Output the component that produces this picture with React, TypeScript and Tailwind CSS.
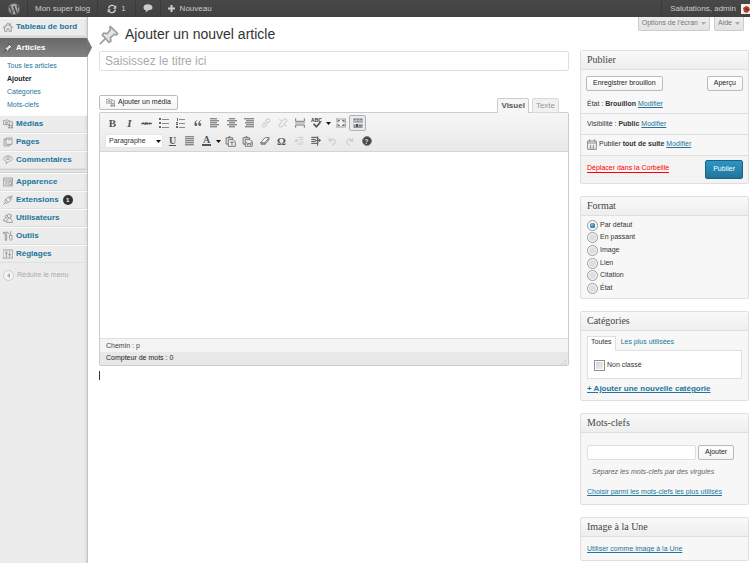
import type { ReactNode } from "react";
import { FaWordpress } from "react-icons/fa";

/* ---------- icons (drawn on a 30-unit grid) ---------- */

function Glyph({ children, className = "size-[10px]" }: { children: ReactNode; className?: string }) {
  return (
    <svg
      viewBox="0 0 30 30"
      className={`shrink-0 ${className}`}
      fill="none"
      stroke="currentColor"
      strokeWidth="2.5"
      strokeLinecap="round"
      strokeLinejoin="round"
      aria-hidden="true"
    >
      {children}
    </svg>
  );
}

const HomeIcon = () => (
  <Glyph>
    <path d="M1 16 15 3l14 13-3 2L15 8 4 18zM5 18v10h7v-8h6v8h7V18M22 4v5" />
  </Glyph>
);

const PinIcon = ({ className, fill = "#e4e4e4" }: { className?: string; fill?: string }) => (
  <Glyph className={className}>
    <path d="M17 2 28 13l-2 2-3-1-6 5 1 5-3 2L5 15l2-3 5 1 5-6-1-3z" fill={fill} />
    <path d="M10 20 2 28" />
  </Glyph>
);

const MediaIcon = ({ className }: { className?: string }) => (
  <Glyph className={className}>
    <path d="M2 5h4l2-2h5l2 2h4v12H2z" />
    <circle cx="10" cy="11" r="3" />
    <path d="M22 8h6v11H16M20 19v7M28 19v7" />
    <circle cx="18" cy="26" r="2" />
    <circle cx="26" cy="26" r="2" />
  </Glyph>
);

const PagesIcon = () => (
  <Glyph>
    <path d="M10 3h17v19H10zM10 7H3v20h17v-5M15 8h7" />
  </Glyph>
);

const CommentIcon = () => (
  <Glyph>
    <path d="M15 3C7 3 2 6 2 11s4 8 9 8l-2 8 8-8c7 0 11-3 11-8s-5-8-13-8zM9 9h12M9 13h10" strokeWidth="2" />
  </Glyph>
);

const AppearanceIcon = () => (
  <Glyph>
    <path d="M2 3h26v24H2zM2 9h26M6 15h9M6 21h7M19 14h6v9h-6z" />
  </Glyph>
);

const PlugIcon = () => (
  <Glyph>
    <path d="m2 28 6-6M8 14l8 8c-3 3-7 3-9 1s-2-6 1-9zM9 13C11 7 17 4 22 6l-4 4M17 21c6-2 9-8 7-13l-4 4M22 6l5-4M24 8l4-4" />
  </Glyph>
);

const UsersIcon = () => (
  <Glyph>
    <circle cx="19" cy="9" r="6" />
    <path d="M11 27c0-8 3-11 8-11s9 3 9 11zM11 6a4 4 0 1 0 0 8M8 15c-4 1-6 4-6 9h6" />
  </Glyph>
);

const ToolsIcon = () => (
  <Glyph>
    <path d="M1 4h14l2 4M1 4v4h6v20h4V8M23 2v11M20 13h7v12c0 4-7 4-7 0z" />
  </Glyph>
);

const SettingsIcon = () => (
  <Glyph>
    <path d="M1 3h28v24H1z" />
    <path d="M10 8v15M20 8v15M7 12h6M17 17h6" />
  </Glyph>
);

const Caret = ({ className = "" }: { className?: string }) => (
  <svg viewBox="0 0 10 6" className={`h-[3px] w-[5px] shrink-0 ${className}`} fill="currentColor" aria-hidden="true">
    <path d="M0 0h10L5 6z" />
  </svg>
);

const Lines = ({ rows }: { rows: [number, number][] }) => (
  <svg viewBox="0 0 10 10" className="size-[10px]" fill="#8a8a8a" aria-hidden="true">
    {rows.map(([x, w], i) => (
      <rect key={i} x={x} y={i * 2} width={w} height="1.4" />
    ))}
  </svg>
);

const LinkGlyph = ({ broken }: { broken?: boolean }) => (
  <Glyph className="size-[10px] text-[#d0d0d0]">
    <g strokeWidth="3.5">
      <path d="m13 9 5-5c5-4 11 2 7 7l-5 5M17 21l-5 5c-5 4-11-2-7-7l5-5" />
      {broken ? <path d="M5 5l5 5M24 24l-5-5" /> : <path d="m11 19 8-8" />}
    </g>
  </Glyph>
);

const PasteGlyph = ({ letter }: { letter: string }) => (
  <Glyph className="size-[11px] text-[#6a6a6a]">
    <path d="M8 22H3V5h18v4M8 5l2-3h4l2 3" />
    <path d="M10 10h12l6 6v12H10z" fill="#f4f4f4" />
    {letter === "T" ? <path d="M15 17h8M19 17v8" /> : <path d="m13 17 2 8 4-6 4 6 2-8" />}
  </Glyph>
);

const IndentGlyph = ({ out }: { out?: boolean }) => (
  <Glyph className={out ? "size-[10px] text-[#cccccc]" : "size-[10px] text-[#555]"}>
    {out ? (
      <path d="M12 4h15M18 10h9M18 18h9M12 24h15M9 9l-6 5 6 5M3 14h11" strokeWidth="3" />
    ) : (
      <path d="M2 4h18M2 10h11M2 16h11M2 22h18M20 3v25M14 13h14M23 8l5 5-5 5" strokeWidth="3" />
    )}
  </Glyph>
);

/* ---------- toolbar ---------- */

function Tool({ label, active, children }: { label: string; active?: boolean; children: ReactNode }) {
  return (
    <button
      type="button"
      aria-label={label}
      title={label}
      className={`flex h-[16px] w-[17px] shrink-0 items-center justify-center rounded-xs border leading-none ${
        active ? "border-[#b0b0b0] bg-[#e9ecee]" : "border-transparent"
      }`}
    >
      {children}
    </button>
  );
}

function DropArrow({ label }: { label: string }) {
  return (
    <button type="button" aria-label={label} className="flex h-[16px] w-[7px] shrink-0 items-center justify-center text-[#111]">
      <Caret />
    </button>
  );
}

const serif = "font-['Liberation_Serif',serif]";

function Toolbar() {
  return (
    <div className="flex flex-col gap-[2px] border-b border-[#d5d5d5] bg-linear-to-b from-[#f6f6f6] to-[#e9e9e9] pt-[2px] pb-[2px] pl-[4px]">
      <div className="flex h-[16px] items-center">
        <Tool label="Gras"><span className={`${serif} text-[11px] font-bold text-[#555]`}>B</span></Tool>
        <Tool label="Italique"><span className={`${serif} text-[11px] font-bold text-[#555] italic`}>I</span></Tool>
        <Tool label="Barré"><span className={`${serif} text-[5px] font-bold text-[#555] line-through`}>ABC</span></Tool>
        <Tool label="Liste à puces">
          <svg viewBox="0 0 10 10" className="size-[10px]" fill="#8a8a8a" aria-hidden="true">
            <path d="M0 0h2v2H0zM0 4h2v2H0zM0 8h2v2H0z" fill="#666" />
            <path d="M3 1h7v1H3zM3 5h7v1H3zM3 9h7v1H3z" />
          </svg>
        </Tool>
        <Tool label="Liste numérotée">
          <svg viewBox="0 0 10 10" className="size-[10px]" fill="#8a8a8a" aria-hidden="true">
            <path d="M1 0h1v3H1zM0 4h2v1L1 6h1v1H0V6l1-1H0zM0 8h2v2H0z" fill="#666" />
            <path d="M3 1h6v1H3zM3 5h6v1H3zM3 9h6v1H3z" />
          </svg>
        </Tool>
        <Tool label="Citation">
          <svg viewBox="0 0 24 20" className="h-[6px] w-[8px]" fill="#666" aria-hidden="true">
            <path d="M10 0C4 2 0 7 0 13c0 4 2 7 5 7s5-2 5-5-2-5-5-5c0-4 2-7 5-8zM23 0c-6 2-10 7-10 13 0 4 2 7 5 7s5-2 5-5-2-5-5-5c0-4 2-7 5-8z" />
          </svg>
        </Tool>
        <Tool label="Aligner à gauche"><Lines rows={[[0, 7], [0, 9], [0, 7], [0, 9], [0, 7]]} /></Tool>
        <Tool label="Centrer"><Lines rows={[[2, 6], [0, 10], [2, 6], [0, 10], [2, 6]]} /></Tool>
        <Tool label="Aligner à droite"><Lines rows={[[0, 10], [2, 8], [1, 9], [2, 8], [1, 9]]} /></Tool>
        <Tool label="Insérer un lien"><LinkGlyph /></Tool>
        <Tool label="Supprimer le lien"><LinkGlyph broken /></Tool>
        <Tool label="Balise Lire la suite">
          <Glyph className="size-[10px] text-[#7a7a7a]">
            <path d="M2 2v8h26V2M2 28v-7h26v7M2 15h2M8 15h2M14 15h2M20 15h2M26 15h2" strokeWidth="3" />
          </Glyph>
        </Tool>
        <Tool label="Correcteur orthographique">
          <span className="flex flex-col items-center">
            <span className="text-[5px] leading-[4px] font-bold text-[#333]">ABC</span>
            <svg viewBox="0 0 14 10" className="h-[6px] w-[8px]" fill="none" stroke="#555" strokeWidth="3" aria-hidden="true">
              <path d="m1 3 5 5 7-8" />
            </svg>
          </span>
        </Tool>
        <DropArrow label="Choix de la langue" />
        <Tool label="Plein écran">
          <Glyph className="size-[10px] text-[#777]">
            <path d="M1 3h28v24H1z" strokeWidth="2" />
            <path d="M6 11V8h4M20 8h4v3M24 19v3h-4M10 22H6v-3" strokeWidth="4" />
          </Glyph>
        </Tool>
        <Tool label="Afficher/cacher les options" active>
          <svg viewBox="0 0 10 10" className="size-[10px]" aria-hidden="true">
            <rect width="10" height="10" fill="#b4bbbe" />
            <path d="M1 1.500h2M4 1.500h2M7 1.500h2" stroke="#788a90" />
            <path d="M1 3.500h2M7 3.500h2" stroke="#c79c65" />
            <path d="M4 3.500h2" stroke="#5e93ad" />
            <path d="M0 5.500h10" stroke="#e8eaea" />
            <path d="M1 7.500h1M6 7.500h3M1 9h8" stroke="#70777a" />
            <path d="M3 6h2v3H3z" fill="#4c5356" />
          </svg>
        </Tool>
      </div>
      <div className="flex h-[16px] items-center pl-px">
        <div className="relative mr-px w-[58px] shrink-0">
          <select
            aria-label="Format du paragraphe"
            className="block h-[14px] w-full appearance-none border border-[#e6e6e6] bg-white pl-[3px] text-[7px] leading-[12px] text-[#333]"
          >
            <option>Paragraphe</option>
          </select>
          <Caret className="pointer-events-none absolute top-[6px] right-[2px] text-[#111]" />
        </div>
        <Tool label="Souligné"><span className={`${serif} text-[10px] font-bold text-[#555] underline`}>U</span></Tool>
        <Tool label="Justifier"><Lines rows={[[0, 9], [0, 9], [0, 9], [0, 9], [0, 9]]} /></Tool>
        <Tool label="Couleur du texte">
          <span className={`${serif} border-b-2 border-[#555] px-px text-[10px] leading-[8px] font-bold text-[#555]`}>A</span>
        </Tool>
        <DropArrow label="Choix de la couleur" />
        <Tool label="Coller en texte brut"><PasteGlyph letter="T" /></Tool>
        <Tool label="Coller depuis Word"><PasteGlyph letter="W" /></Tool>
        <Tool label="Effacer la mise en forme">
          <Glyph className="size-[10px] text-[#666]">
            <path d="M3 19 15 5h12L15 19z" fill="#f8f8f8" />
            <path d="M3 19v6h12V19M15 25 27 11V5" fill="#999" strokeWidth="2" />
          </Glyph>
        </Tool>
        <Tool label="Caractère spécial"><span className={`${serif} text-[11px] font-bold text-[#555]`}>Ω</span></Tool>
        <Tool label="Diminuer le retrait"><IndentGlyph out /></Tool>
        <Tool label="Augmenter le retrait"><IndentGlyph /></Tool>
        <Tool label="Annuler">
          <Glyph className="size-[9px] text-[#cccccc]">
            <path d="M4 4v9h9M4 13C10 5 22 5 24 14c1 6-3 10-8 12" strokeWidth="3.5" />
          </Glyph>
        </Tool>
        <Tool label="Rétablir">
          <Glyph className="size-[9px] text-[#cccccc]">
            <path d="M26 4v9h-9M26 13C20 5 8 5 6 14c-1 6 3 10 8 12" strokeWidth="3.5" />
          </Glyph>
        </Tool>
        <Tool label="Aide">
          <span className="flex size-[10px] items-center justify-center rounded-full border border-[#888] bg-[#444] text-[7px] leading-none font-bold text-[#ddd]">
            ?
          </span>
        </Tool>
      </div>
    </div>
  );
}

/* ---------- side menu ---------- */

function MenuItem({ icon, label, badge }: { icon: ReactNode; label: string; badge?: string }) {
  return (
    <li>
      <a
        href="#"
        className="flex h-[18px] items-center gap-[3px] border-t border-t-[#f9f9f9] border-b border-b-[#dfdfdf] pl-[3px] text-[8px] font-bold text-[#21759b]"
      >
        <span className="text-[#929292]">{icon}</span>
        {label}
        {badge && (
          <span className="ml-px flex size-[10px] items-center justify-center rounded-full bg-[#333] text-[6px] leading-none text-white">
            {badge}
          </span>
        )}
      </a>
    </li>
  );
}

function SideMenu() {
  return (
    <nav className="w-[88px] shrink-0 border-r border-[#c4c4c4] bg-[#ececec] shadow-[inset_-3px_0_3px_-2px_#d4d4d4]">
      <ul className="pt-px">
        <MenuItem icon={<HomeIcon />} label="Tableau de bord" />
      </ul>
      <div className="h-[2px] bg-[#d8d8d8]" />
      <div className="relative">
        <a
          href="#"
          className="flex h-[19px] items-center gap-[3px] bg-linear-to-b from-[#686868] to-[#828282] pl-[3px] text-[8px] font-bold text-white"
        >
          <PinIcon className="size-[10px] text-[#4a4a4a]" fill="#f0e4e0" />
          Articles
        </a>
        <svg viewBox="0 0 10 38" className="absolute top-0 left-full h-[19px] w-[5px]" fill="#757575" aria-hidden="true">
          <path d="M0 0 10 19 0 38z" />
        </svg>
      </div>
      <ul className="bg-white pt-[2px] pb-[4px] pl-[7px] text-[7px] leading-[13px] text-[#21759b]">
        <li><a href="#">Tous les articles</a></li>
        <li><a href="#" className="font-bold text-[#222]">Ajouter</a></li>
        <li><a href="#">Catégories</a></li>
        <li><a href="#">Mots-clefs</a></li>
      </ul>
      <ul>
        <MenuItem icon={<MediaIcon />} label="Médias" />
        <MenuItem icon={<PagesIcon />} label="Pages" />
        <MenuItem icon={<CommentIcon />} label="Commentaires" />
      </ul>
      <div className="h-[4px] border-y border-[#cfcfcf] bg-[#e4e4e4]" />
      <ul>
        <MenuItem icon={<AppearanceIcon />} label="Apparence" />
        <MenuItem icon={<PlugIcon />} label="Extensions" badge="1" />
        <MenuItem icon={<UsersIcon />} label="Utilisateurs" />
        <MenuItem icon={<ToolsIcon />} label="Outils" />
        <MenuItem icon={<SettingsIcon />} label="Réglages" />
      </ul>
      <button type="button" className="mt-[6px] flex items-center gap-[3px] pl-[3px] text-[7px] leading-[12px] text-[#aaa]">
        <span className="flex size-[11px] items-center justify-center rounded-full border border-[#ccc] bg-[#f5f5f5]">
          <Caret className="rotate-90 text-[#aaa]" />
        </span>
        Réduire le menu
      </button>
    </nav>
  );
}

/* ---------- top bar ---------- */

function AdminBar() {
  return (
    <header className="flex h-[17px] items-stretch bg-linear-to-b from-[#484848] to-[#414141] text-[8px] text-[#ccc]">
      <a href="#" aria-label="WordPress" className="flex w-[28px] items-center justify-center border-r border-[#3a3a3a]">
        <FaWordpress className="size-[12px] text-[#aaa]" />
      </a>
      <a href="#" className="flex items-center px-[7px]">Mon super blog</a>
      <a href="#" className="flex items-center gap-[4px] border-l border-[#3a3a3a] px-[9px]">
        <svg viewBox="0 0 30 30" className="size-[10px]" fill="none" stroke="currentColor" strokeWidth="4" aria-hidden="true">
          <path d="M5 13C6 3 20 1 24 9M25 17C24 27 10 29 6 21" />
          <path d="M28 4v10H18zM2 26V16h10z" fill="currentColor" stroke="none" />
        </svg>
        1
      </a>
      <a href="#" aria-label="Commentaires" className="flex items-center border-l border-[#3a3a3a] px-[7px]">
        <svg viewBox="0 0 28 26" className="h-[9px] w-[10px]" fill="currentColor" aria-hidden="true">
          <path d="M14 1C6 1 1 4 1 10s4 8 8 8l-2 7 8-7c8 0 12-3 12-8s-5-9-13-9z" />
        </svg>
      </a>
      <a href="#" className="flex items-center gap-[5px] border-l border-[#3a3a3a] px-[7px]">
        <svg viewBox="0 0 14 14" className="size-[7px]" stroke="currentColor" strokeWidth="4" aria-hidden="true">
          <path d="M7 0v14M0 7h14" />
        </svg>
        Nouveau
      </a>
      <a href="#" className="ml-auto flex items-center gap-[5px] border-l border-[#3a3a3a] pl-[8px]">
        Salutations, admin
        <svg viewBox="0 0 9 10" className="h-[10px] w-[9px]" aria-hidden="true">
          <rect width="9" height="10" fill="#f5efe9" />
          <path d="M2 4 5 2l3 1 1 3-3 3-3-1z" fill="#b03a2e" />
          <path d="m5 4 2 1-1 2z" fill="#5d1f18" />
        </svg>
      </a>
    </header>
  );
}

/* ---------- right column ---------- */

function Panel({ title, children }: { title: string; children: ReactNode }) {
  return (
    <section className="rounded-xs border border-[#dfdfdf] bg-[#f7f7f7]">
      <h3
        className={`${serif} h-[19px] border-b border-[#dfdfdf] bg-linear-to-b from-[#f9f9f9] to-[#eeeeee] pl-[6px] text-[10px] leading-[18px] text-[#464646]`}
      >
        {title}
      </h3>
      {children}
    </section>
  );
}

function SmallButton({ children }: { children: ReactNode }) {
  return (
    <button
      type="button"
      className="flex h-[15px] shrink-0 items-center gap-[3px] rounded-xs border border-[#bbb] bg-linear-to-b from-white to-[#f4f4f4] px-[6px] text-[7px] text-[#222]"
    >
      {children}
    </button>
  );
}

const Link = ({ children }: { children: ReactNode }) => (
  <a href="#" className="text-[#21759b] underline">{children}</a>
);

const formats = ["Par défaut", "En passant", "Image", "Lien", "Citation", "État"];

function SideColumn() {
  return (
    <aside className="flex w-[169px] shrink-0 flex-col gap-[12px] text-[7px] text-[#333]">
      <Panel title="Publier">
        <div className="flex items-center justify-between px-[5px] pt-[6px]">
          <SmallButton>Enregistrer brouillon</SmallButton>
          <SmallButton>Aperçu</SmallButton>
        </div>
        <p className="h-[23px] border-b border-[#dfdfdf] pl-[6px] leading-[26px]">
          État : <b>Brouillon</b> <Link>Modifier</Link>
        </p>
        <p className="h-[21px] border-b border-[#dfdfdf] pl-[6px] leading-[20px]">
          Visibilité : <b>Public</b> <Link>Modifier</Link>
        </p>
        <p className="flex h-[20px] items-center gap-[2px] pb-[2px] pl-[6px]">
          <svg viewBox="0 0 30 33" className="h-[11px] w-[10px]" fill="none" stroke="#888" strokeWidth="3" aria-hidden="true">
            <path d="M2 6h26v25H2zM2 12h26M8 1v7M22 1v7M11 17v10M19 17v10M8 27h6M16 27h6" />
          </svg>
          <span>Publier <b>tout de suite</b> <Link>Modifier</Link></span>
        </p>
        <div className="flex h-[28px] items-center justify-between border-t border-[#dfdfdf] bg-[#f3f3f3] pr-[5px] pl-[6px]">
          <a href="#" className="mb-[4px] border-b border-[#f00] leading-[9px] text-[#f00]">Déplacer dans la Corbeille</a>
          <button
            type="button"
            className="h-[19px] rounded-xs border border-[#1b607f] bg-linear-to-b from-[#2a95c5] to-[#21759b] px-[7px] text-[7px] text-white"
          >
            Publier
          </button>
        </div>
      </Panel>

      <Panel title="Format">
        <fieldset className="my-[3px] grid h-[76px] grid-rows-6 pl-[6px]">
          {formats.map((name, i) => (
            <label key={name} className="flex items-center gap-[2px]">
              <input
                type="radio"
                name="format"
                defaultChecked={i === 0}
                className="size-[11px] shrink-0 appearance-none rounded-full border border-[#9a9c9e] bg-[#dddfe2] bg-clip-content p-px checked:bg-[#0f4a70] checked:bg-radial-[at_40%_35%] checked:from-[#6bc7ee] checked:to-[#0a2c4a] checked:p-[2px]"
              />
              <span className="mb-[2px] leading-[9px]">{name}</span>
            </label>
          ))}
        </fieldset>
      </Panel>

      <Panel title="Catégories">
        <div className="px-[6px] pt-[5px]">
          <div className="flex items-start">
            <button type="button" className="-mb-px h-[15px] border border-b-0 border-[#dfdfdf] bg-white px-[3px] pb-[3px]">Toutes</button>
            <button type="button" className="h-[15px] px-[5px] pb-[3px] text-[#21759b]">Les plus utilisées</button>
          </div>
          <div className="-mt-px h-[29px] border border-[#dfdfdf] bg-white pt-[9px] pl-[6px]">
            <label className="flex items-start gap-[2px] leading-[9px]">
              <input
                type="checkbox"
                className="size-[11px] appearance-none border border-[#8d8f91] bg-linear-to-br from-[#cdd0d4] to-[#f2f2f2] bg-clip-content p-px"
              />
              Non classé
            </label>
          </div>
          <p className="h-[21px] text-[8px] leading-[20px] font-bold"><Link>+ Ajouter une nouvelle catégorie</Link></p>
        </div>
      </Panel>

      <Panel title="Mots-clefs">
        <div className="px-[6px] pt-[12px]">
          <div className="flex gap-[2px]">
            <input aria-label="Mots-clefs" className="h-[15px] w-[109px] rounded-xs border border-[#dfdfdf] bg-white px-[3px]" />
            <SmallButton>Ajouter</SmallButton>
          </div>
          <p className="pt-[5px] pl-[5px] leading-[13px] text-[#666] italic">Séparez les mots-clefs par des virgules</p>
          <p className="h-[26px] pt-[9px] leading-[9px]"><Link>Choisir parmi les mots-clefs les plus utilisés</Link></p>
        </div>
      </Panel>

      <Panel title="Image à la Une">
        <p className="h-[23px] pl-[6px] leading-[24px]"><Link>Utiliser comme image à la Une</Link></p>
      </Panel>
    </aside>
  );
}

/* ---------- page ---------- */

function MetaTab({ children }: { children: ReactNode }) {
  return (
    <button
      type="button"
      className="flex h-[14px] items-center gap-[3px] rounded-b-xs border border-t-0 border-[#ccc] bg-linear-to-b from-[#ececec] to-[#e3e3e3] px-[3px] text-[7px] text-[#777]"
    >
      {children}
      <Caret className="text-[#aaa]" />
    </button>
  );
}

export default function App() {
  return (
    <div className="flex min-h-screen flex-col bg-white font-['Liberation_Sans',Arial,sans-serif]">
      <AdminBar />
      <div className="flex flex-1">
        <SideMenu />
        <main className="min-w-0 flex-1 pr-px pl-[11px]">
          <div className="flex h-[33px] items-start justify-between">
            <h1 className="flex h-[35px] items-center gap-[6px] text-[14px] text-[#333]">
              <PinIcon className="size-[20px] text-[#a0a0a0]" />
              Ajouter un nouvel article
            </h1>
            <div className="flex gap-[4px] pr-[5px]">
              <MetaTab>Options de l'écran</MetaTab>
              <MetaTab>Aide</MetaTab>
            </div>
          </div>

          <div className="flex gap-[11px]">
            <div className="min-w-0 flex-1 pt-px">
              <input
                aria-label="Titre"
                placeholder="Saisissez le titre ici"
                className="block h-[20px] w-full rounded-xs border border-[#dfdfdf] px-[5px] text-[12px] text-[#333] placeholder:text-[#aaa]"
              />
              <div className="mt-[24px] flex items-start justify-between pr-[10px]">
                <SmallButton>
                  <MediaIcon className="size-[9px] text-[#8a8a8a]" />
                  Ajouter un média
                </SmallButton>
                <div className="-mb-px flex gap-[3px] pt-[3px]">
                  <button type="button" className="z-10 h-[15px] rounded-t-xs border border-b-0 border-[#ccc] bg-[#f6f6f6] px-[3px] text-[8px] font-bold text-[#555]">
                    Visuel
                  </button>
                  <button type="button" className="h-[15px] rounded-t-xs border border-[#d8d8d8] bg-[#f1f1f1] px-[3px] text-[8px] text-[#999]">
                    Texte
                  </button>
                </div>
              </div>
              <div className="overflow-hidden rounded-xs border border-[#ccc]">
                <Toolbar />
                <textarea aria-label="Contenu" className="block h-[186px] w-full resize-none bg-white p-[6px] text-[9px] outline-none" />
                <div className="h-[14px] border-t border-[#dfdfdf] bg-[#f4f4f4] pl-[6px] text-[7px] leading-[13px] text-[#444]">Chemin : p</div>
                <div className="flex h-[13px] items-center justify-between bg-[#e8e8e8] pl-[6px] text-[7px] text-[#222]">
                  Compteur de mots : 0
                  <svg viewBox="0 0 6 6" className="mr-px size-[6px] self-end" stroke="#bbb" strokeDasharray="1 1" aria-hidden="true">
                    <path d="M0 6 6 0M3 6l3-3" />
                  </svg>
                </div>
              </div>
              <div className="mt-[5px] h-[9px] w-px bg-[#333]" />
            </div>
            <SideColumn />
          </div>
        </main>
      </div>
    </div>
  );
}
